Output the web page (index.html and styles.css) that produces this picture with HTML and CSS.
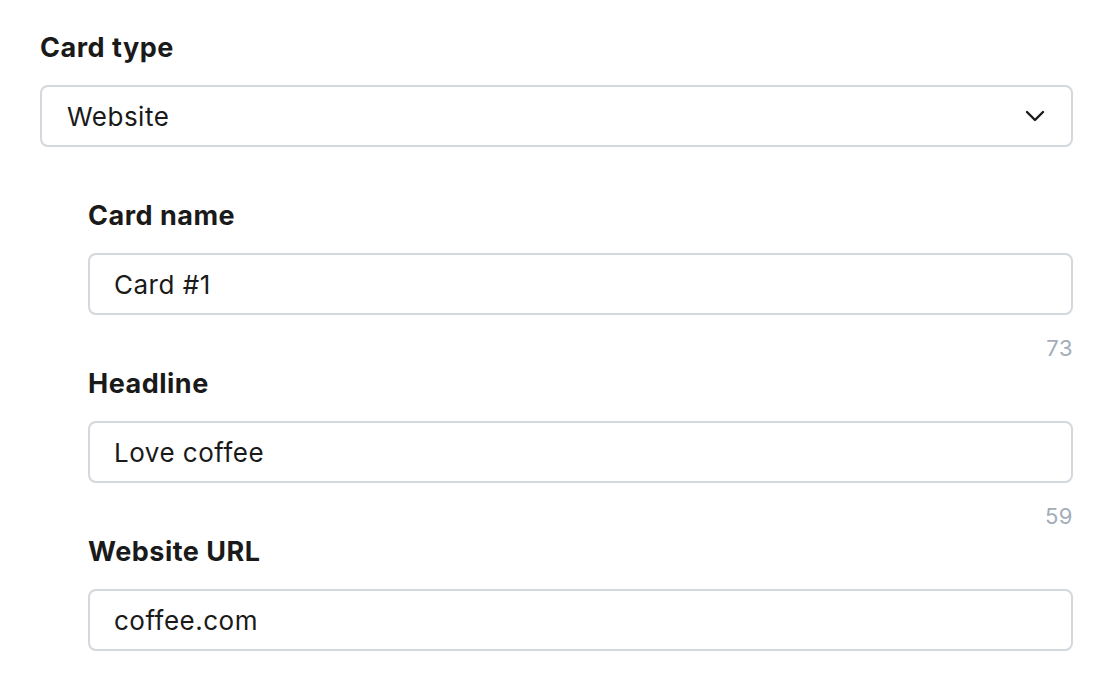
FILE: index.html
```html
<!DOCTYPE html>
<html>
<head>
<meta charset="utf-8">
<link rel="stylesheet" href="styles.css">
</head>
<body>
<div class="form">
  <div class="field">
    <div class="label">Card type</div>
    <div class="select">
      <span>Website</span>
      <svg class="chevron" width="20" height="12" viewBox="0 0 20 12"><path d="M2 2 L10 10 L18 2" fill="none" stroke="#1a1a1a" stroke-width="2.4" stroke-linecap="round" stroke-linejoin="round"/></svg>
    </div>
  </div>
  <div class="nested">
    <div class="field">
      <div class="label">Card name</div>
      <div class="input">Card #1</div>
      <div class="counter">73</div>
    </div>
    <div class="field">
      <div class="label">Headline</div>
      <div class="input">Love coffee</div>
      <div class="counter">59</div>
    </div>
    <div class="field">
      <div class="label">Website URL</div>
      <div class="input">coffee.com</div>
    </div>
  </div>
</div>
</body>
</html>
```

FILE: styles.css
```css
* { box-sizing: border-box; }
html, body { margin: 0; background: #fff; }
body {
  font-family: Inter, "Noto Sans", sans-serif;
  color: #1a1a1a;
}
.form {
  padding: 32px 47px 0 40px;
}
.label {
  font-size: 27px;
  line-height: 32px;
  font-weight: 700;
  letter-spacing: 0.5px;
  margin-bottom: 21px;
}
.select, .input {
  height: 62px;
  border: 2px solid #d3d8de;
  border-radius: 8px;
  font-size: 26px;
  letter-spacing: 0.5px;
  display: flex;
  align-items: center;
  padding: 0 24px;
}
.select {
  justify-content: space-between;
  padding-left: 25px;
  padding-right: 26px;
}
.nested {
  padding-left: 48px;
  margin-top: 53px;
}
.counter {
  text-align: right;
  font-size: 22px;
  line-height: 28px;
  color: #a3adb7;
  letter-spacing: 0.5px;
  margin-top: 19px;
  margin-bottom: 6px;
}
```
